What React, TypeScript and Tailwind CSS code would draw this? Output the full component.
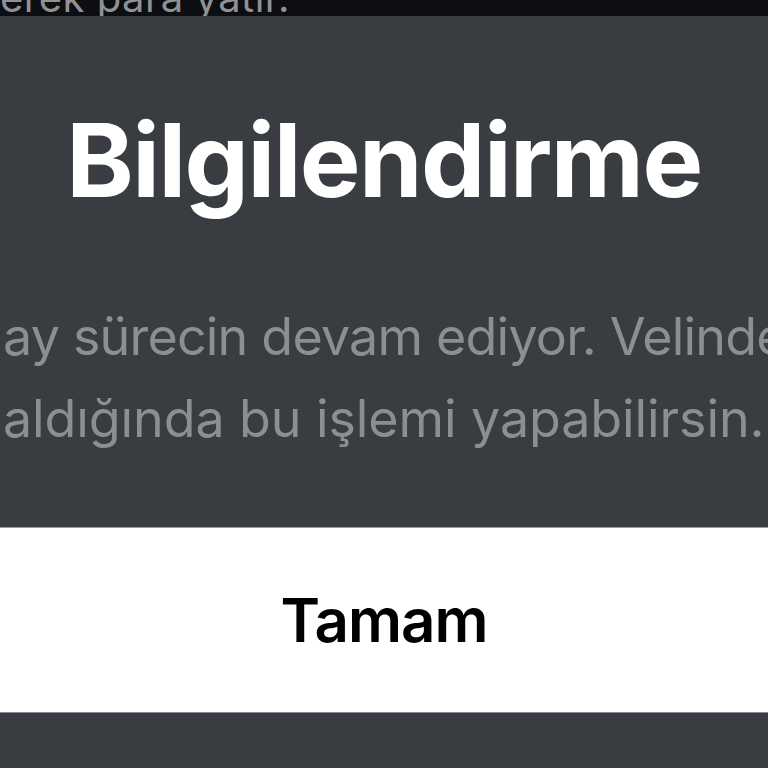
export default function App() {
  return (
    <div className="w-[768px] h-[768px] overflow-hidden flex flex-col bg-[#3a3d42]" style={{ fontFamily: 'Inter, "Noto Sans", sans-serif' }}>
      <div className="h-[16px] shrink-0 bg-[#0d0e11] overflow-hidden">
        <div className="mt-[-24px] pl-[0px] whitespace-nowrap text-[40px] leading-[44px] text-[#8f9195] tracking-[0.5px]">erek para yatır.</div>
      </div>
      <div className="h-[511px] shrink-0 bg-[#393c41] flex flex-col items-center overflow-hidden">
        <div className="mt-[84px] text-[102px] leading-[120px] font-bold text-white tracking-[-1.5px] whitespace-nowrap">Bilgilendirme</div>
        <div className="mt-[76px] w-full flex flex-col text-[52px] leading-[82px] text-[#8b8e93] whitespace-nowrap overflow-hidden">
          <div className="w-full pl-[3px] tracking-[-0.8px]">ay sürecin devam ediyor. Velinde</div>
          <div className="w-full pl-[3px] tracking-[-0.1px]">aldığında bu işlemi yapabilirsin.</div>
        </div>
      </div>
      <div className="h-[1px] bg-[#9a9ca0]"></div>
      <div className="h-[184px] shrink-0 bg-white flex items-center justify-center">
        <span className="text-[60px] font-semibold text-black tracking-[-1px]">Tamam</span>
      </div>
      <div className="h-[1px] bg-[#8a8c90]"></div>
      <div className="flex-1 bg-[#3a3d42]"></div>
    </div>
  );
}
